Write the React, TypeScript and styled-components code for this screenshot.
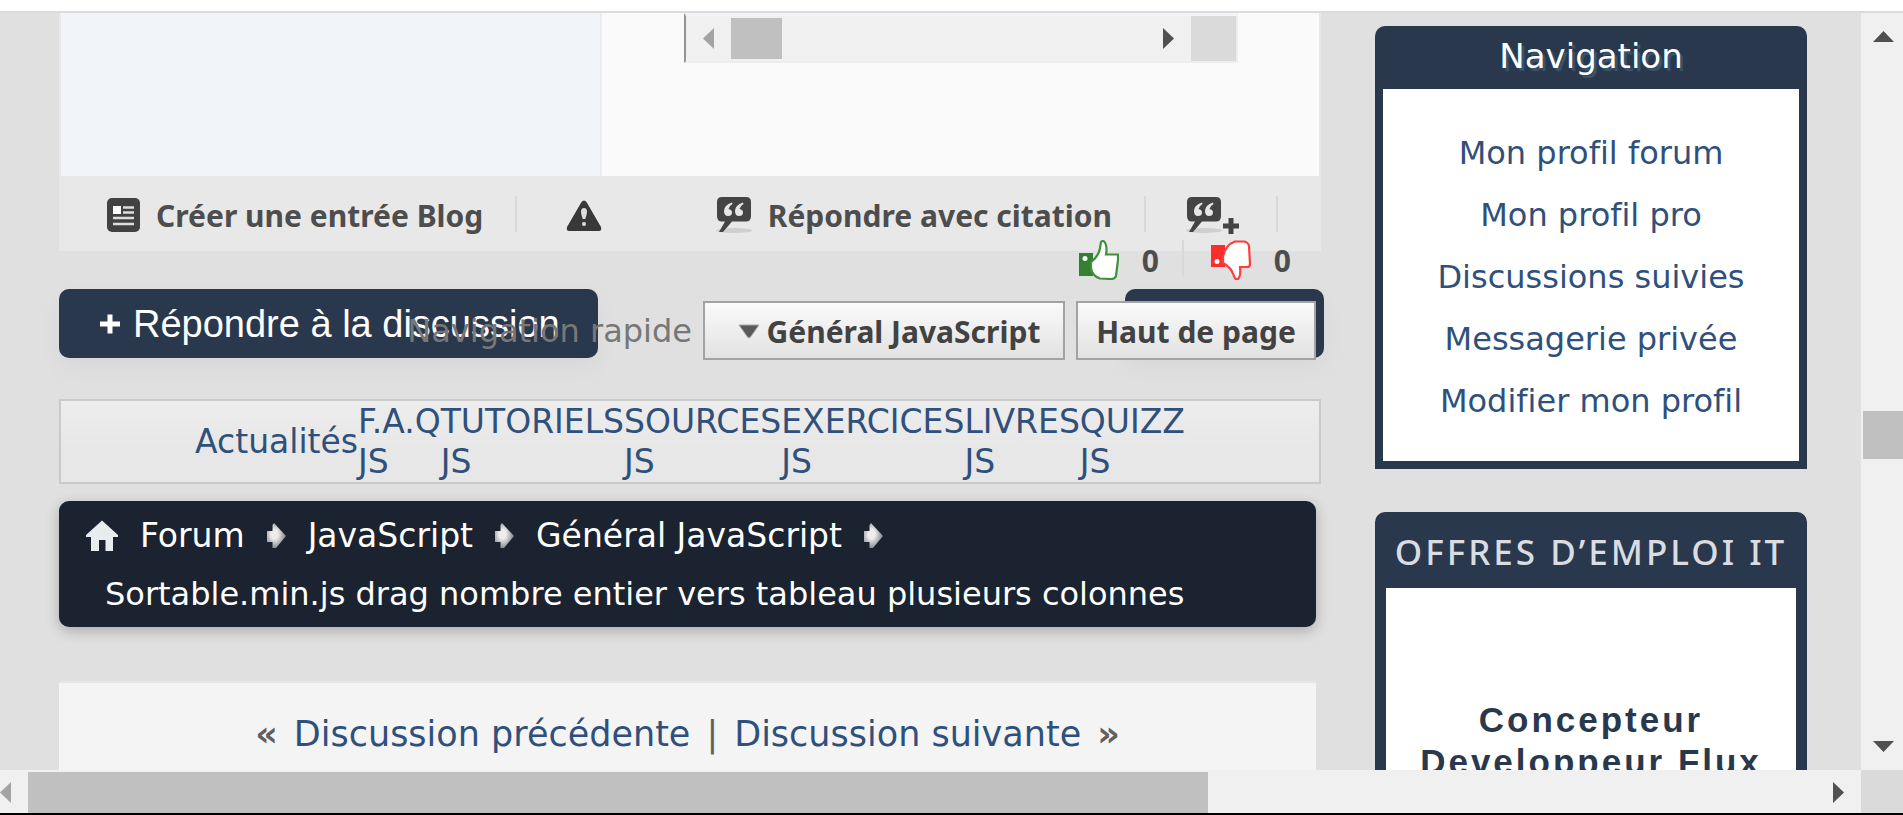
import React from "react";
import styled, { createGlobalStyle, css } from "styled-components";

const sans = `Verdana, "DejaVu Sans", sans-serif`;
const compact = `"Noto Sans", sans-serif`;
const arial = `"Liberation Sans", Arial, sans-serif`;

const GlobalStyle = createGlobalStyle`
  *, *::before, *::after { box-sizing: border-box; }
  body { margin: 0; background: #e0e0e0; font-family: ${sans}; font-variant-ligatures: none; }
  a { text-decoration: none; color: inherit; }
  button { font: inherit; color: inherit; cursor: pointer; }
  ul, ol { list-style: none; margin: 0; padding: 0; }
  h2, h3, p { margin: 0; font-weight: normal; }
`;

/* ---- window frame ---- */

const Frame = styled.div`
  display: flex;
  flex-direction: column;
  height: 100vh;
  overflow: hidden;
  border-bottom: 2px solid #000;
`;

const TopStrip = styled.div`
  flex: none;
  height: 13px;
  background: #fff;
  border-bottom: 2px solid #dcdcdc;
`;

const Viewport = styled.div`
  flex: 1;
  min-height: 0;
  display: flex;
`;

const Page = styled.div`
  flex: 1;
  min-width: 0;
  overflow: hidden;
  display: flex;
  gap: 54px;
  padding: 0 54px 0 59px;
`;

const Track = styled.div<{ $vertical?: boolean }>`
  flex: none;
  display: flex;
  justify-content: space-between;
  background: #f0f0f0;
  ${(p) =>
    p.$vertical
      ? css`
          flex-direction: column;
          align-items: stretch;
          width: 42px;
          padding: 18px 0 18px 2px;
        `
      : css`
          align-items: center;
          height: 43px;
          padding-top: 2px;
        `}
`;

const Thumb = styled.div`
  background: #c0c0c0;
`;

const PageThumbV = styled(Thumb)`
  height: 48px;
  margin-top: 369px;
`;

const PageThumbH = styled(Thumb)`
  align-self: stretch;
  width: 62%;
  margin-left: 17px;
`;

const Spacer = styled.div`
  flex: 1;
`;

const Corner = styled.div`
  align-self: stretch;
  width: 42px;
  margin: -2px 0 0 17px;
  background: #dadada;
`;

const ArrowButton = styled.button<{ $faded?: boolean }>`
  display: flex;
  justify-content: center;
  padding: 0;
  border: 0;
  background: none;
  color: ${(p) => (p.$faded ? "#a3a3a3" : "#505050")};
`;

/* ---- main column ---- */

const Main = styled.main`
  flex: 1;
  min-width: 0;
`;

const Post = styled.article`
  background: #e8e8e8;
`;

const PostBody = styled.div`
  display: flex;
  height: 163px;
  padding: 0 2px;
`;

const Author = styled.div`
  flex: none;
  width: 43%;
  background: #f1f5f9;
  border-right: 2px solid #ededed;
`;

const Message = styled.div`
  flex: 1;
  padding: 0 81px 0 82px;
  background: #fafafa;
`;

const CodeBox = styled.div`
  display: flex;
  align-items: center;
  height: 50px;
  border: 2px solid #ededed;
  border-top: 3px solid #f1f5f9;
  border-left-color: #919395;
  background: #f0f0f0;
  padding-left: 17px;
`;

const CodeThumb = styled(Thumb)`
  width: 51px;
  height: 41px;
  margin-left: 17px;
`;

const CodeCorner = styled.div`
  width: 45px;
  align-self: stretch;
  margin-left: 17px;
  background: #dadada;
`;

const PostFoot = styled.footer`
  display: flex;
  align-items: flex-start;
  height: 75px;
  padding: 20px 43px 0 48px;
  color: #4d4d4d;
`;

const Separator = styled.span<{ $gap: number }>`
  width: 2px;
  height: 36px;
  margin-left: ${(p) => p.$gap}px;
  background: #d8d8d8;
`;

const Action = styled.a<{ $gap?: number }>`
  display: flex;
  gap: 16px;
  margin-left: ${(p) => p.$gap ?? 0}px;
  font: bold 30px/40px ${compact};
  white-space: nowrap;
  svg {
    flex: none;
  }
`;

const Votes = styled.div`
  position: relative;
  z-index: 1;
  display: flex;
  justify-content: flex-end;
  height: 49px;
  margin: -11px 30px 0 0;
  color: #4d4d4d;
`;

const Vote = styled.button<{ $gap?: number }>`
  display: flex;
  gap: 23px;
  margin-left: ${(p) => p.$gap ?? 0}px;
  padding: 0;
  border: 0;
  background: none;
  font: bold 30px/42px ${compact};
  height: 44px;
`;

const Replies = styled.div`
  position: relative;
  display: flex;
  justify-content: space-between;
  height: 69px;
  margin-right: -3px;
`;

const navy = css`
  border: 0;
  border-radius: 10px;
  background: #29384d;
  color: #fff;
  box-shadow: 0 10px 24px rgba(0, 0, 0, 0.04);
`;

const ReplyButton = styled.button`
  ${navy}
  display: flex;
  align-items: center;
  gap: 12px;
  width: 539px;
  padding: 0 0 0 40px;
  font: 38px/50px ${arial};
  text-align: left;
  white-space: nowrap;
`;

const ToolsButton = styled.button`
  ${navy}
  width: 199px;
`;

const QuickNav = styled.div`
  position: absolute;
  top: 12px;
  right: 8px;
  display: flex;
  gap: 11px;
  font-size: 32px;
  line-height: 60px;
  color: #777;
  white-space: nowrap;
`;

const QuickButton = styled.button<{ $wide?: boolean }>`
  display: flex;
  align-items: center;
  justify-content: center;
  gap: 7px;
  height: 59px;
  width: ${(p) => (p.$wide ? 362 : 240)}px;
  padding: 2px 0 0 ${(p) => (p.$wide ? 10 : 0)}px;
  border: 2px solid #a3a3a3;
  background: linear-gradient(#fafafa, #e2e2e2);
  font: bold 30px/50px ${compact};
  color: #424242;
  white-space: nowrap;
`;

const Tabs = styled.nav`
  display: flex;
  align-items: center;
  justify-content: center;
  height: 85px;
  margin-top: 41px;
  border: 2px solid #cacaca;
  background: linear-gradient(#ededed, #e7e7e7 60%);
  font-size: 33px;
  line-height: 40px;
  color: #30507c;
`;

const Tab = styled.a`
  display: flex;
  flex-direction: column;
`;

const Crumbs = styled.nav`
  height: 126px;
  margin: 17px 5px 0 0;
  padding: 5px 27px;
  border-radius: 10px;
  background: #1a232f;
  box-shadow: 0 4px 14px rgba(0, 0, 0, 0.24);
  color: #fff;
  font-size: 33px;
  white-space: nowrap;
`;

const CrumbRow = styled.ol`
  display: flex;
  align-items: center;
  gap: 22px;
  line-height: 59px;
`;

const Crumb = styled.li`
  display: flex;
  align-items: center;
  gap: 22px;
`;

const CrumbTitle = styled.p`
  padding-left: 19px;
  font-size: 32px;
  line-height: 58px;
`;

const Pager = styled.nav`
  display: flex;
  justify-content: center;
  gap: 16px;
  height: 120px;
  margin: 54px 5px 0 0;
  padding: 26px 0 0 0;
  background: #f4f4f4;
  border-top: 2px solid #e6e6e6;
  font-size: 35px;
  line-height: 50px;
  color: #606060;
  white-space: nowrap;
  a {
    color: #30507c;
  }
`;

const PagerMark = styled.span`
  font-weight: bold;
`;

/* ---- sidebar ---- */

const Side = styled.aside`
  flex: none;
  width: 432px;
  padding-top: 13px;
`;

const Panel = styled.section<{ $height: number }>`
  display: flex;
  flex-direction: column;
  min-height: ${(p) => p.$height}px;
  margin-bottom: 43px;
  padding: 0 8px 8px;
  border-radius: 10px 10px 0 0;
  background: #29384d;
  text-align: center;
`;

const PanelTitle = styled.h2`
  height: 63px;
  font-size: 34px;
  line-height: 60px;
  color: #fff;
  text-shadow: 3px 3px 1px #3a566a;
`;

const Links = styled.ul`
  flex: 1;
  padding-top: 33px;
  background: #fff;
  font-size: 32px;
  line-height: 62px;
  color: #30507c;
`;

const JobsTitle = styled.h2`
  height: 76px;
  font: 500 35px/80px ${compact};
  letter-spacing: 3px;
  color: #d9dde1;
  white-space: nowrap;
`;

const Jobs = styled.div`
  flex: 1;
  margin: 0 3px;
  padding: 111px 16px 0;
  background: #fff;
  font: bold 35px/42px ${arial};
  letter-spacing: 3px;
  color: #29384d;
`;

/* ---- drawings ---- */

type Dir = "left" | "right" | "up" | "down";
const triangles: Record<Dir, [number, number, string]> = {
  left: [11, 21, "11,0 11,21 0,10.5"],
  right: [11, 21, "0,0 0,21 11,10.5"],
  up: [21, 11, "0,11 21,11 10.5,0"],
  down: [21, 11, "0,0 21,0 10.5,11"],
};

function Arrow({ dir, faded, label }: { dir: Dir; faded?: boolean; label: string }) {
  const [w, h, points] = triangles[dir];
  return (
    <ArrowButton $faded={faded} aria-label={label}>
      <svg width={w} height={h} viewBox={`0 0 ${w} ${h}`}>
        <polygon points={points} fill="currentColor" />
      </svg>
    </ArrowButton>
  );
}

const BlogIcon = () => (
  <svg width="33" height="36" viewBox="0 0 33 36">
    <rect x="0" y="2" width="33" height="34" rx="5" fill="#424242" />
    <rect x="6" y="10" width="8" height="8" fill="#fff" />
    <path d="M16 11.5h11M16 16.5h11M6 22h21M6 28h21" stroke="#ddd" strokeWidth="2.6" />
  </svg>
);

const WarnIcon = () => (
  <svg width="36" height="36" viewBox="0 0 36 36">
    <path d="M18 4.5Q19.500 4.500 20.500 6L35 31Q36 35 33 35H3Q0 35 1 31L15.500 6Q16.500 4.500 18 4.500Z" fill="#383838" />
    <path d="M18 12c4 0 3.500 5 1.200 11h-2.400C14.500 17 14 12 18 12Z" fill="#ddd" />
    <circle cx="18" cy="28" r="2" fill="#ddd" />
  </svg>
);

function QuoteIcon({ plus }: { plus?: boolean }) {
  const w = plus ? 54 : 37;
  return (
    <svg width={w} height="39" viewBox={`0 0 ${w} 39`}>
      <ellipse cx="19" cy="34.500" rx="18" ry="2.500" fill="#cfcfcf" />
      <path d="M7 1H31Q36 1 36 6V20Q36 25.500 31 25.500H17L8 36H4L10 25.500H7Q2 25.500 2 20V6Q2 1 7 1Z" fill="#444" />
      <path
        d="M17 6.500Q9 9 9 15Q9 20 13 20Q17 20 17 16.500Q17 13.500 13.500 13Q14 10 17.500 8ZM28 6.500Q20 9 20 15Q20 20 24 20Q28 20 28 16.500Q28 13.500 24.500 13Q25 10 28.500 8Z"
        fill="#e6e6e6"
      />
      {plus && <path d="M46 22v16M38 30h16" stroke="#444" strokeWidth="5" />}
    </svg>
  );
}

const ThumbUp = () => (
  <svg width="40" height="40" viewBox="0 0 40 40">
    <path d="M0 13H14V36H0Z" fill="#328030" />
    <path
      d="M12 22Q20 16 21 8L22 2Q25 -1 27 5Q28 10 27 14.500H39V20L37 36Q36 39 32 39L21 38.500Q13 36 12 28Z"
      fill="#fff"
      stroke="#3f8f3d"
      strokeWidth="2.200"
    />
    <circle cx="6" cy="18.500" r="2.500" fill="#fff" />
  </svg>
);

const ThumbDown = () => (
  <svg width="40" height="40" viewBox="0 0 40 40">
    <path d="M0 5H14V27H0Z" fill="#ff2c2c" />
    <path
      d="M12 17Q14 5 24 1.500H33Q37 2 38 6L39 24Q39 27 36 27H29Q30 36 27 39Q24 40 23 36Q20 27 12 23Z"
      fill="#fff"
      stroke="#ff3d3d"
      strokeWidth="2.200"
    />
    <circle cx="6" cy="21.500" r="2.500" fill="#fff" />
  </svg>
);

const PlusIcon = () => (
  <svg width="22" height="22" viewBox="0 0 22 22">
    <path d="M11 1.500v19M1 11h20" stroke="#fff" strokeWidth="5" />
  </svg>
);

const CaretIcon = () => (
  <svg width="22" height="16" viewBox="0 0 22 16">
    <path d="M1 1H21L12.500 13Q11 15 9.500 13Z" fill="#5a5a5a" stroke="#a8a8a8" />
  </svg>
);

const HomeIcon = () => (
  <svg width="32" height="32" viewBox="0 0 32 32">
    <path d="M16 0.500L32 15V17H27V31H19.500V20H13V31H5V17H0V15Z" fill="#e9ecee" />
  </svg>
);

const CrumbArrow = () => (
  <svg width="19" height="28" viewBox="0 0 19 28">
    <defs>
      <radialGradient id="crumb-arrow" cx="0.4" cy="0.45" r="0.6">
        <stop offset="0.3" stopColor="#efecec" />
        <stop offset="1" stopColor="#7d8288" />
      </radialGradient>
    </defs>
    <path d="M0 9H5.500V3L7 1L19 14L9 26H5.500V20H0Z" fill="url(#crumb-arrow)" />
  </svg>
);

/* ---- content ---- */

const tabs = ["F.A.Q", "TUTORIELS", "SOURCES", "EXERCICES", "LIVRES", "QUIZZ"];
const crumbs = ["Forum", "JavaScript", "Général JavaScript"];
const links = [
  "Mon profil forum",
  "Mon profil pro",
  "Discussions suivies",
  "Messagerie privée",
  "Modifier mon profil",
];

export default function App() {
  return (
    <Frame>
      <GlobalStyle />
      <TopStrip />
      <Viewport>
        <Page>
          <Main>
            <Post>
              <PostBody>
                <Author />
                <Message>
                  <CodeBox>
                    <Arrow dir="left" faded label="Défiler le code à gauche" />
                    <CodeThumb />
                    <Spacer />
                    <Arrow dir="right" label="Défiler le code à droite" />
                    <CodeCorner />
                  </CodeBox>
                </Message>
              </PostBody>
              <PostFoot>
                <Action href="#blog">
                  <BlogIcon />
                  Créer une entrée Blog
                </Action>
                <Separator $gap={32} />
                <Action href="#signaler" $gap={49} aria-label="Signaler">
                  <WarnIcon />
                </Action>
                <Spacer />
                <Action href="#citer">
                  <QuoteIcon />
                  Répondre avec citation
                </Action>
                <Separator $gap={32} />
                <Action href="#multi" $gap={39} aria-label="Citation multiple">
                  <QuoteIcon plus />
                </Action>
                <Separator $gap={37} />
              </PostFoot>
            </Post>
            <Votes>
              <Vote>
                <ThumbUp />0
              </Vote>
              <Separator $gap={23} />
              <Vote $gap={27}>
                <ThumbDown />0
              </Vote>
            </Votes>
            <Replies>
              <ReplyButton>
                <PlusIcon />
                Répondre à la discussion
              </ReplyButton>
              <ToolsButton aria-label="Outils" />
              <QuickNav>
                Navigation rapide
                <QuickButton $wide>
                  <CaretIcon />
                  Général JavaScript
                </QuickButton>
                <QuickButton>Haut de page</QuickButton>
              </QuickNav>
            </Replies>
            <Tabs>
              <Tab href="#actualites">Actualités</Tab>
              {tabs.map((t) => (
                <Tab key={t} href={`#${t}`}>
                  <span>{t}</span>
                  <span>JS</span>
                </Tab>
              ))}
            </Tabs>
            <Crumbs>
              <CrumbRow>
                <HomeIcon />
                {crumbs.map((c) => (
                  <Crumb key={c}>
                    <a href={`#${c}`}>{c}</a>
                    <CrumbArrow />
                  </Crumb>
                ))}
              </CrumbRow>
              <CrumbTitle>Sortable.min.js drag nombre entier vers tableau plusieurs colonnes</CrumbTitle>
            </Crumbs>
            <Pager>
              <PagerMark>«</PagerMark>
              <a href="#precedente">Discussion précédente</a>
              <span>|</span>
              <a href="#suivante">Discussion suivante</a>
              <PagerMark>»</PagerMark>
            </Pager>
          </Main>
          <Side>
            <Panel $height={443}>
              <PanelTitle>Navigation</PanelTitle>
              <Links>
                {links.map((l) => (
                  <li key={l}>
                    <a href={`#${l}`}>{l}</a>
                  </li>
                ))}
              </Links>
            </Panel>
            <Panel $height={443}>
              <JobsTitle>OFFRES D’EMPLOI IT</JobsTitle>
              <Jobs>
                <a href="#offre">Concepteur Developpeur Flux</a>
              </Jobs>
            </Panel>
          </Side>
        </Page>
        <Track $vertical>
          <Arrow dir="up" label="Défiler vers le haut" />
          <PageThumbV />
          <Spacer />
          <Arrow dir="down" label="Défiler vers le bas" />
        </Track>
      </Viewport>
      <Track>
        <Arrow dir="left" faded label="Défiler à gauche" />
        <PageThumbH />
        <Spacer />
        <Arrow dir="right" label="Défiler à droite" />
        <Corner />
      </Track>
    </Frame>
  );
}
